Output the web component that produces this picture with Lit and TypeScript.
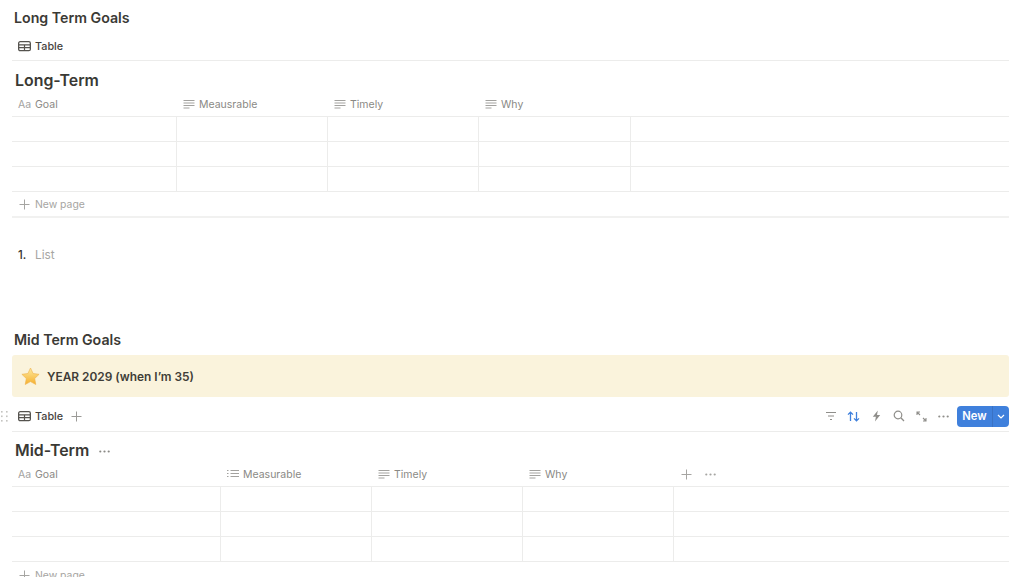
import { LitElement, html, css, svg } from "lit";
import { customElement } from "lit/decorators.js";

const textIcon = svg`<path d="M.5 2.500h11M.5 5h11M.5 7.500h11M.5 10h6" fill="none" stroke="#a3a29f" stroke-width="1"/>`;
const listIcon = svg`<path d="M3.500 2.500h8.500M3.500 5.500h8.500M3.500 8.500h8.500" fill="none" stroke="#a3a29f" stroke-width="1"/><path d="M0 2.500h1.500M0 5.500h1.500M0 8.500h1.500" fill="none" stroke="#a3a29f" stroke-width="1"/>`;

const tableIcon = html`<svg class="tbl" width="13" height="12" viewBox="0 0 13 12"><rect x=".65" y="1.650" width="11.700" height="9" rx="1.500" fill="none" stroke="#55534e" stroke-width="1.300"/><path d="M.65 4.800h11.700M.65 7.700h11.700M6.500 4.800v5.800" fill="none" stroke="#55534e" stroke-width="1.200"/></svg>`;
const plus = (c = "#a6a5a2") => html`<svg width="11" height="11" viewBox="0 0 11 11"><path d="M5.500 .5v10M.5 5.500h10" fill="none" stroke="${c}" stroke-width="1"/></svg>`;
const dots = (c = "#8f8e8a") => html`<svg width="11" height="3" viewBox="0 0 11 3"><circle cx="1.300" cy="1.500" r="1.100" fill="${c}"/><circle cx="5.500" cy="1.500" r="1.100" fill="${c}"/><circle cx="9.700" cy="1.500" r="1.100" fill="${c}"/></svg>`;

type Col = { name: string; icon: "aa" | "text" | "list"; width: number };

const headIcon = (k: Col["icon"]) =>
  k === "aa"
    ? html`<span class="aa">Aa</span>`
    : html`<svg class="hi" width="12" height="12" viewBox="0 0 12 12">${k === "text" ? textIcon : listIcon}</svg>`;

const longCols: Col[] = [
  { name: "Goal", icon: "aa", width: 165 },
  { name: "Meausrable", icon: "text", width: 151 },
  { name: "Timely", icon: "text", width: 151 },
  { name: "Why", icon: "text", width: 152 },
];
const midCols: Col[] = [
  { name: "Goal", icon: "aa", width: 209 },
  { name: "Measurable", icon: "list", width: 151 },
  { name: "Timely", icon: "text", width: 151 },
  { name: "Why", icon: "text", width: 151 },
];

@customElement("app-root")
export class AppRoot extends LitElement {
  static styles = css`
    :host { display: block; height: 577px; overflow: hidden; background: #fff; font-family: Inter, "Liberation Sans", sans-serif; color: #37352f; }
    .page { padding: 0 15px 0 12px; position: relative; }
    .heading { font-size: 14.2px; font-weight: 600; line-height: 20px; padding-left: 2px; color: #3b3a35; }
    .h1 { padding-top: 8px; }
    .h2 { padding-top: 2px; margin-top: 63px; }
    .tabs { display: flex; align-items: center; padding: 3px 0 0 6px; gap: 4px; border-bottom: 1px solid #ececeb; box-sizing: border-box; font-size: 10.8px; font-weight: 500; color: #45433e; }
    .tabs1 { margin-top: 1px; height: 32px; }
    .tabs2 { height: 34px; margin-top: 1px; }
    .tabs .add { margin-left: 4px; display: flex; }
    .right { margin-left: auto; display: flex; align-items: center; }
    .tools { display: flex; align-items: center; }
    .tools svg { display: block; }
    .tool { width: 22.500px; display: flex; justify-content: center; }
    .newbtn { margin-left: 2px; width: 52px; height: 21px; background: #3f80dc; border-radius: 4px; color: #fff; font-size: 11.200px; font-weight: 600; display: flex; align-items: center; box-sizing: border-box; }
    .newbtn .lbl { width: 35px; text-align: center; border-right: 1px solid #3a72c4; line-height: 21px; }
    .newbtn .chev { flex: 1; display: flex; justify-content: center; }
    .title { display: flex; align-items: center; gap: 10px; padding: 10px 0 0 3px; font-size: 15.900px; font-weight: 600; color: #3a3934; height: 20px; line-height: 20px; }
    .title.tight { padding-top: 9px; }
    .row { display: flex; height: 25px; border-bottom: 1px solid #ececeb; box-sizing: border-box; }
    .cell { box-sizing: border-box; border-right: 1px solid #ececeb; flex: none; }
    .row.head { color: #8a8985; font-size: 10.500px; height: 26px; padding-top: 1px; }
    .row.head .cell { border: none; display: flex; align-items: center; gap: 4px; padding-left: 6px; font-weight: 400; }
    .hi { display: block; }
    .aa { color: #a3a29f; font-size: 10.500px; width: 13px; }
    .extra { display: flex; align-items: center; gap: 13px; padding-left: 7px; }
    .newpage { height: 26px; display: flex; align-items: center; gap: 5px; padding-left: 7px; font-size: 10.400px; color: #a6a5a2; border-bottom: 2px solid #f1f1f0; box-sizing: border-box; }
    .list { display: flex; align-items: center; height: 20px; margin-top: 27px; padding-left: 6px; font-size: 11.800px; }
    .list b { font-weight: 500; width: 17px; font-size: 11.500px; }
    .list span { color: #a6a5a2; }
    .callout { margin-top: 5px; height: 42px; background: #faf3dc; border-radius: 3px; display: flex; align-items: center; gap: 7px; padding-left: 9px; font-size: 11.900px; font-weight: 600; color: #3f3d37; }
    .grip { position: absolute; left: 1px; top: 411px; display: block; }
    .np2 { border-bottom: none; }
  `;

  private table(cols: Col[], name: string, mid = false) {
    return html`
      <div class="title ${mid ? "tight" : ""}">${name}${mid ? dots("#8a8985") : ""}</div>
      <div class="row head">
        ${cols.map((c) => html`<div class="cell" style="width:${c.width}px">${headIcon(c.icon)}${c.name}</div>`)}
        ${mid ? html`<div class="extra">${plus()}${dots("#a6a5a2")}</div>` : ""}
      </div>
      ${[0, 1, 2].map(
        () => html`<div class="row">${cols.map((c) => html`<div class="cell" style="width:${c.width}px"></div>`)}</div>`
      )}
    `;
  }

  render() {
    return html`<div class="page">
      <div class="heading h1">Long Term Goals</div>
      <div class="tabs tabs1">${tableIcon}<span>Table</span></div>
      ${this.table(longCols, "Long-Term")}
      <div class="newpage">${plus()}<span>New page</span></div>
      <div class="list"><b>1.</b><span>List</span></div>
      <div class="heading h2">Mid Term Goals</div>
      <div class="callout">
        <svg width="19" height="19" viewBox="0 0 19 19"><defs><linearGradient id="s" x1="0" y1="0" x2="0" y2="1"><stop offset="0" stop-color="#fdeaa0"/><stop offset="1" stop-color="#f6b02e"/></linearGradient></defs><path d="M9.500 1l2.600 5.500 6 .8-4.400 4.200 1.100 6L9.500 14.600 4.200 17.500l1.100-6L.9 7.300l6-.8z" fill="url(#s)" stroke="#eeb04a" stroke-width=".6" stroke-linejoin="round"/></svg>
        <span>YEAR 2029 (when I’m 35)</span>
      </div>
      <svg class="grip" width="7" height="11" viewBox="0 0 7 11"><g fill="#c4c3c0"><rect x="0" y="0" width="1.600" height="1.600"/><rect x="5" y="0" width="1.600" height="1.600"/><rect x="0" y="4.500" width="1.600" height="1.600"/><rect x="5" y="4.500" width="1.600" height="1.600"/><rect x="0" y="9" width="1.600" height="1.600"/><rect x="5" y="9" width="1.600" height="1.600"/></g></svg>
      <div class="tabs tabs2">
        ${tableIcon}<span>Table</span><span class="add">${plus("#9b9a97")}</span>
        <div class="right">
          <div class="tools">
            <span class="tool"><svg width="12" height="10" viewBox="0 0 12 10"><path d="M1 1.500h10M3 5h6M5 8.500h2" fill="none" stroke="#8f8e8a" stroke-width="1.200"/></svg></span>
            <span class="tool"><svg width="13" height="11" viewBox="0 0 13 11"><path d="M3.500 10V1.200M1 3.600l2.500-2.500L6 3.600M9.500 1v8.800M7 7.400l2.500 2.500L12 7.400" fill="none" stroke="#3f80dc" stroke-width="1.300"/></svg></span>
            <span class="tool"><svg width="9" height="12" viewBox="0 0 9 12"><path d="M5.800 .5L.8 6.800h3.100L3 11.500l5.200-6.500H5z" fill="#8f8e8a"/></svg></span>
            <span class="tool"><svg width="12" height="12" viewBox="0 0 12 12"><circle cx="5" cy="5" r="3.800" fill="none" stroke="#8f8e8a" stroke-width="1.200"/><path d="M7.800 7.800L11 11" stroke="#8f8e8a" stroke-width="1.300"/></svg></span>
            <span class="tool"><svg width="11" height="11" viewBox="0 0 11 11"><path d="M1 4V1h3M1 1l3 3M10 7v3H7M10 10L7 7" fill="none" stroke="#8f8e8a" stroke-width="1.100"/></svg></span>
            <span class="tool">${dots()}</span>
          </div>
          <div class="newbtn"><span class="lbl">New</span><span class="chev"><svg width="8" height="5" viewBox="0 0 8 5"><path d="M1 1l3 3 3-3" fill="none" stroke="#fff" stroke-width="1.200"/></svg></span></div>
        </div>
      </div>
      ${this.table(midCols, "Mid-Term", true)}
      <div class="newpage np2">${plus()}<span>New page</span></div>
    </div>`;
  }
}
